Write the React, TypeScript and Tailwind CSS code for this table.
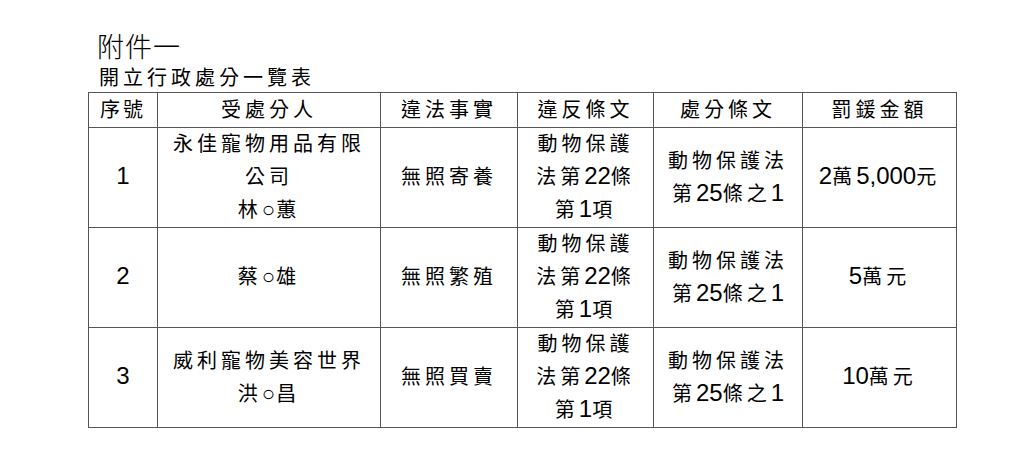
import React from "react";

const rows = [
  {
    no: "1",
    who: ["永佳寵物用品有限", "公司", "林○蕙"],
    fact: "無照寄養",
    amount: "2萬5,000元",
  },
  { no: "2", who: ["蔡○雄"], fact: "無照繁殖", amount: "5萬元" },
  { no: "3", who: ["威利寵物美容世界", "洪○昌"], fact: "無照買賣", amount: "10萬元" },
];

// digits sit at 24px with no tracking, CJK at 20px + 4px tracking
function T({ text }: { text: string }) {
  const parts = text.split(/([0-9,]+|○)/).filter(Boolean);
  return (
    <>
      {parts.map((p, i) =>
        p === "○" ? (
          <span key={i} className="text-[22px] leading-none tracking-[1px]">
            {p}
          </span>
        ) : /^[0-9,]+$/.test(p) ? (
          <span key={i} className="text-[24px] leading-none tracking-normal">
            {p}
          </span>
        ) : (
          <span key={i}>{p}</span>
        )
      )}
    </>
  );
}

const cell = "border border-[#555] text-center align-middle p-0";

export default function App() {
  return (
    <div
      className="w-[1030px] h-[472px] bg-white text-black pl-[88px] pt-[32px]"
      style={{ fontFamily: '"Liberation Sans", "Noto Sans CJK TC", sans-serif' }}
    >
      <div className="pl-[9px] text-[27px] leading-[32px] font-light tracking-[1px]">附件一</div>
      <div className="pl-[11px] text-[20px] leading-[28px] tracking-[4px]">開立行政處分一覽表</div>
      <table className="border-collapse table-fixed w-[868px] text-[20px] leading-[33px] tracking-[4px]">
        <colgroup>
          <col className="w-[69px]" />
          <col className="w-[223px]" />
          <col className="w-[137px]" />
          <col className="w-[136px]" />
          <col className="w-[149px]" />
          <col className="w-[154px]" />
        </colgroup>
        <thead>
          <tr className="h-[35px]">
            <th className={`${cell} font-normal tracking-[3px]`}>序號</th>
            <th className={`${cell} font-normal`}>受處分人</th>
            <th className={`${cell} font-normal`}>違法事實</th>
            <th className={`${cell} font-normal`}>違反條文</th>
            <th className={`${cell} font-normal`}>處分條文</th>
            <th className={`${cell} font-normal`}>罰鍰金額</th>
          </tr>
        </thead>
        <tbody>
          {rows.map((r) => (
            <tr key={r.no} className="h-[99px]">
              <td className={cell}>
                <T text={r.no} />
              </td>
              <td className={cell}>
                {r.who.map((w) => (
                  <div key={w}>
                    <T text={w} />
                  </div>
                ))}
              </td>
              <td className={cell}>{r.fact}</td>
              <td className={cell}>
                <div>動物保護</div>
                <div>
                  <T text="法第22條" />
                </div>
                <div>
                  <T text="第1項" />
                </div>
              </td>
              <td className={cell}>
                <div>動物保護法</div>
                <div>
                  <T text="第25條之1" />
                </div>
              </td>
              <td className={cell}>
                <T text={r.amount} />
              </td>
            </tr>
          ))}
        </tbody>
      </table>
    </div>
  );
}
